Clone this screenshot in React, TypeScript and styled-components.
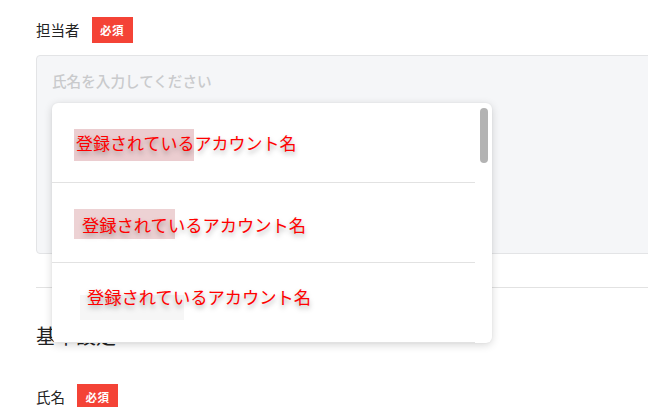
import React from "react";
import styled, { createGlobalStyle } from "styled-components";

const GlobalStyle = createGlobalStyle`
  html, body {
    margin: 0;
    padding: 0;
    background: #ffffff;
    overflow: hidden;
  }
  body {
    font-family: "Noto Sans CJK JP", "Noto Sans", sans-serif;
    color: #222;
  }
`;

const Viewport = styled.div`
  width: 100%;
  height: 100vh;
  overflow: hidden;
`;

const Page = styled.div`
  width: 720px;
  padding: 17px 0 0 36px;
  box-sizing: border-box;
`;

const LabelRow = styled.div<{ $top?: number }>`
  display: flex;
  align-items: center;
  height: 26px;
  margin-top: ${(p) => p.$top ?? 0}px;
`;

const Label = styled.span`
  font-size: 14.5px;
  line-height: 20px;
  color: #222;
  margin-right: 12px;
`;

const Badge = styled.span`
  display: inline-flex;
  align-items: center;
  justify-content: center;
  width: 41px;
  height: 26px;
  background: #f44336;
  color: #fff;
  font-size: 11.5px;
  font-weight: 700;
  letter-spacing: 0.5px;
`;

const InputBox = styled.div`
  position: relative;
  margin-top: 12px;
  height: 199px;
  background: #f5f6f8;
  border: 1px solid #e3e4e6;
  border-radius: 4px;
  box-sizing: border-box;
  padding: 15px 15px;
`;

const Placeholder = styled.div`
  font-size: 14.6px;
  line-height: 20px;
  font-weight: 500;
  color: #c9cacc;
`;

const Dropdown = styled.div`
  position: absolute;
  left: 15px;
  top: 47px;
  width: 440px;
  height: 240px;
  background: #fff;
  border-radius: 6px;
  box-shadow: 0 2px 8px rgba(0, 0, 0, 0.16), 0 0 2px rgba(0, 0, 0, 0.06);
  overflow: hidden;
  z-index: 2;
`;

const List = styled.ul`
  list-style: none;
  margin: 0;
  padding: 0;
  width: 423px;
`;

const Item = styled.li<{ $indent: number; $pt: number }>`
  position: relative;
  height: 80px;
  box-sizing: border-box;
  border-bottom: 1px solid #e2e2e2;
  padding: ${(p) => p.$pt}px 0 0 ${(p) => p.$indent}px;
`;

const Highlight = styled.span<{ $left: number; $top: number; $w: number; $h: number; $bg: string }>`
  position: absolute;
  left: ${(p) => p.$left}px;
  top: ${(p) => p.$top}px;
  width: ${(p) => p.$w}px;
  height: ${(p) => p.$h}px;
  background: ${(p) => p.$bg};
`;

const ItemText = styled.span<{ $size: number }>`
  position: relative;
  font-size: ${(p) => p.$size}px;
  line-height: 26px;
  color: #ff0000;
  text-shadow: 0 3px 5px rgba(0, 0, 0, 0.35);
  white-space: nowrap;
`;

const ScrollThumb = styled.div`
  position: absolute;
  top: 5px;
  right: 4px;
  width: 8px;
  height: 55px;
  border-radius: 4px;
  background: #b3b3b3;
`;

const Divider = styled.hr`
  margin: 33px 0 0 0;
  border: none;
  border-top: 1px solid #e2e2e2;
  height: 0;
`;

const Heading = styled.h2`
  margin: 34px 0 0 0;
  font-size: 20px;
  line-height: 28px;
  font-weight: 400;
  color: #222;
`;

const items = [
  { indent: 24, pt: 27, size: 17, hl: { left: 22, top: 26, w: 120, h: 32, bg: "#ebcdd0" } },
  { indent: 30, pt: 29, size: 17.3, hl: { left: 22, top: 26, w: 101, h: 30, bg: "#edd2d4" } },
  { indent: 35, pt: 21, size: 17.3, hl: { left: 28, top: 32, w: 104, h: 25, bg: "#f6f6f6" } },
];

export default function App() {
  return (
    <>
      <GlobalStyle />
      <Viewport>
        <Page>
          <LabelRow>
            <Label>担当者</Label>
            <Badge>必須</Badge>
          </LabelRow>
          <InputBox>
            <Placeholder>氏名を入力してください</Placeholder>
            <Dropdown>
              <List>
                {items.map((it, i) => (
                  <Item key={i} $indent={it.indent} $pt={it.pt}>
                    <Highlight
                      $left={it.hl.left}
                      $top={it.hl.top}
                      $w={it.hl.w}
                      $h={it.hl.h}
                      $bg={it.hl.bg}
                    />
                    <ItemText $size={it.size}>登録されているアカウント名</ItemText>
                  </Item>
                ))}
              </List>
              <ScrollThumb />
            </Dropdown>
          </InputBox>
          <Divider />
          <Heading>基本設定</Heading>
          <LabelRow $top={34}>
            <Label>氏名</Label>
            <Badge>必須</Badge>
          </LabelRow>
        </Page>
      </Viewport>
    </>
  );
}
